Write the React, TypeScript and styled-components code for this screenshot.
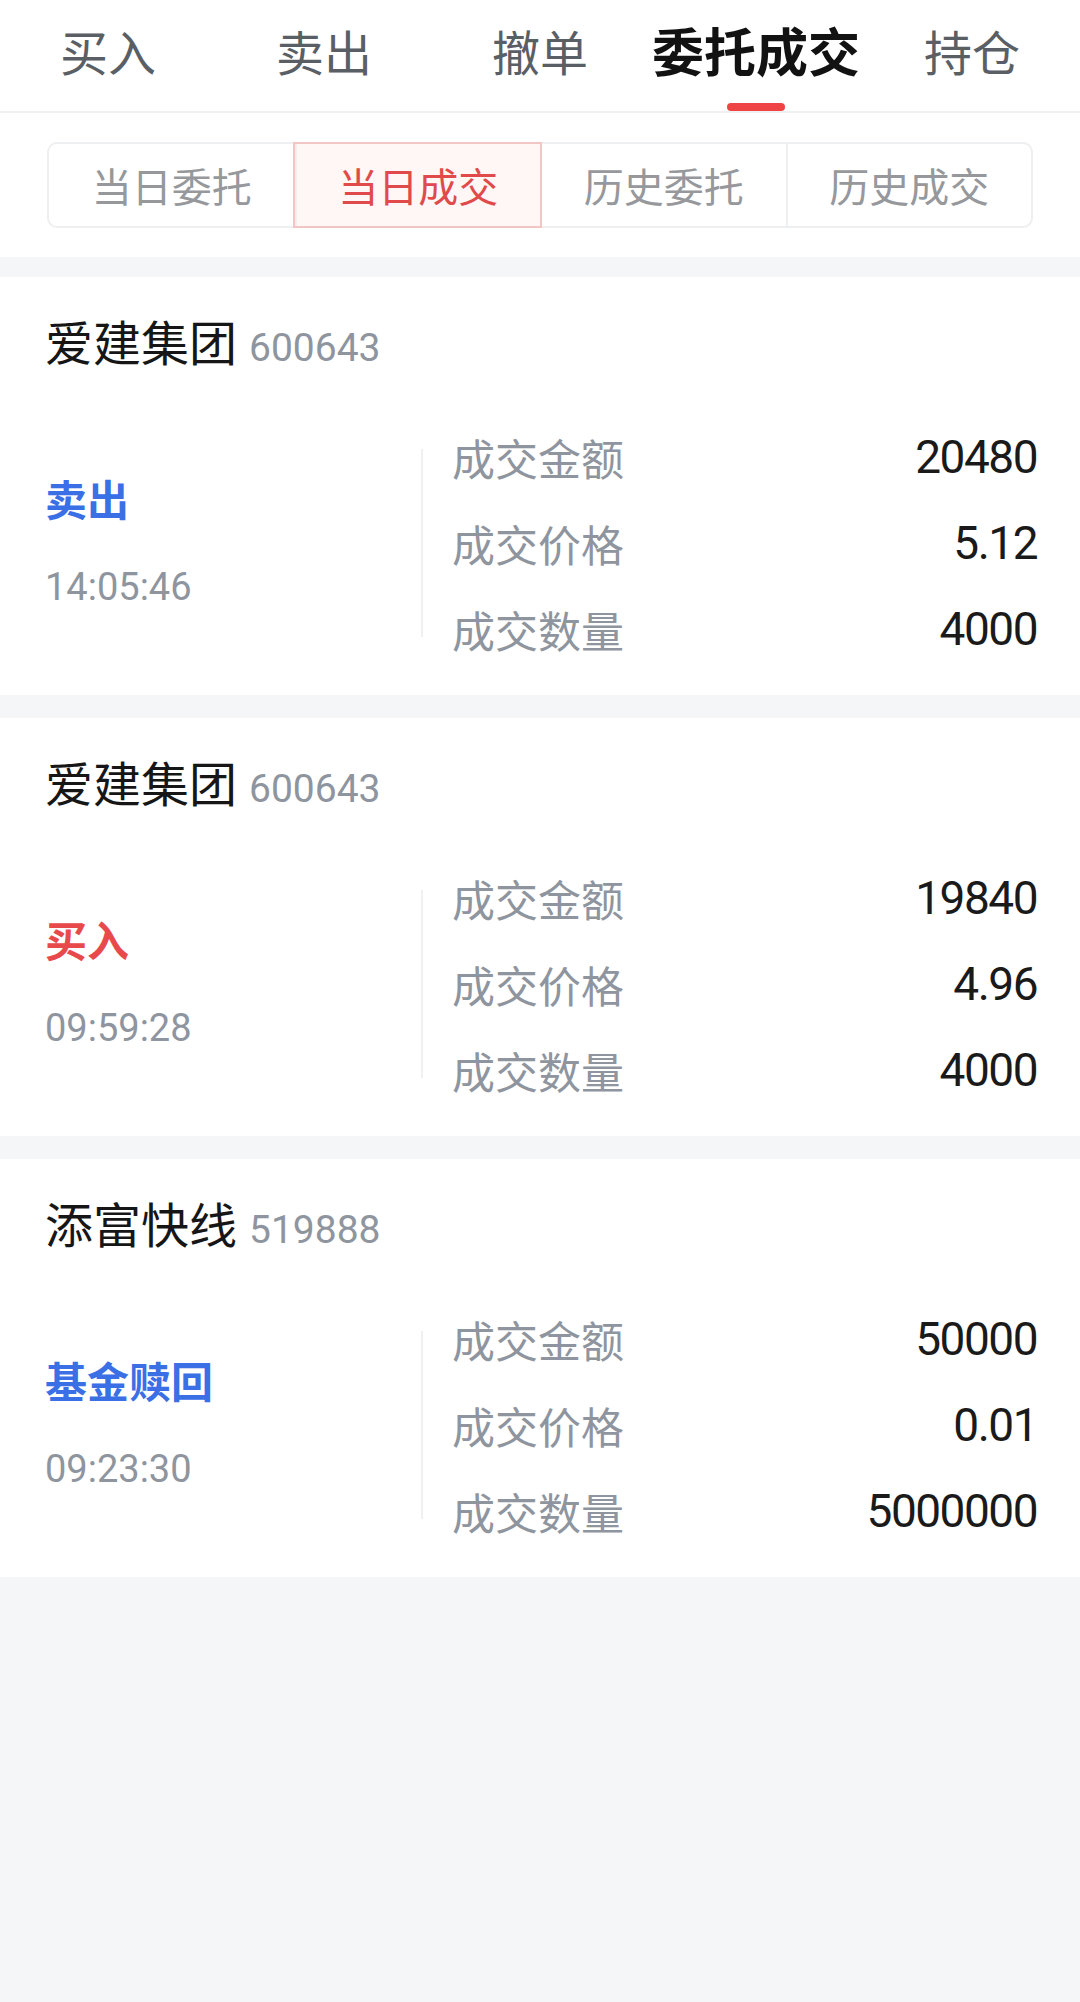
import React from "react";
import styled, { createGlobalStyle } from "styled-components";

const GlobalStyle = createGlobalStyle`
  html, body {
    margin: 0;
    padding: 0;
    background: #f5f6f8;
  }
  body {
    font-family: "Noto Sans CJK SC", "Noto Sans", sans-serif;
    -webkit-font-smoothing: antialiased;
  }
  * {
    box-sizing: border-box;
  }
`;

const Page = styled.div`
  width: 1080px;
  min-height: 2002px;
  background: #f5f6f8;
`;

const TabBar = styled.div`
  display: flex;
  height: 113px;
  background: #fff;
  border-bottom: 2px solid #f0f1f3;
`;

const Tab = styled.div<{ active?: boolean }>`
  position: relative;
  flex: 1;
  display: flex;
  align-items: center;
  justify-content: center;
  padding-bottom: 12px;
  font-size: ${(p) => (p.active ? "52px" : "48px")};
  font-weight: ${(p) => (p.active ? 700 : 400)};
  color: ${(p) => (p.active ? "#121212" : "#5a5e65")};
  line-height: 1;

  &::after {
    content: "";
    display: ${(p) => (p.active ? "block" : "none")};
    position: absolute;
    bottom: 0;
    left: 50%;
    width: 58px;
    height: 8px;
    margin-left: -29px;
    border-radius: 4px;
    background: #ee4444;
  }
`;

const FilterArea = styled.div`
  background: #fff;
  padding: 29px 47px 29px 47px;
`;

const Segments = styled.div`
  display: grid;
  grid-template-columns: repeat(4, 1fr);
  height: 86px;
  border: 2px solid #eeeff1;
  border-radius: 10px;
`;

const Segment = styled.div<{ active?: boolean }>`
  position: relative;
  display: flex;
  align-items: center;
  justify-content: center;
  font-size: 40px;
  color: ${(p) => (p.active ? "#e04a4a" : "#96989c")};
  background: ${(p) => (p.active ? "#fff6f6" : "transparent")};
  border-left: 2px solid #eeeff1;
  z-index: ${(p) => (p.active ? 1 : 0)};
  box-shadow: ${(p) => (p.active ? "0 0 0 2px #f3c6c6" : "none")};

  &:first-child {
    border-left: none;
  }
`;

const List = styled.div`
  display: flex;
  flex-direction: column;
  gap: 23px;
  padding-top: 20px;
`;

const Card = styled.div`
  background: #fff;
  height: 418px;
  padding: 33px 43px 0 45px;
`;

const NameRow = styled.div`
  display: flex;
  align-items: baseline;
  height: 60px;
  line-height: 60px;
`;

const StockName = styled.span`
  font-size: 48px;
  color: #161616;
`;

const StockCode = styled.span`
  margin-left: 12px;
  font-family: Roboto, "Noto Sans", sans-serif;
  font-size: 39px;
  color: #8f959e;
`;

const Body = styled.div`
  display: flex;
  align-items: center;
  margin-top: 44px;
`;

const Side = styled.div`
  width: 376px;
  display: flex;
  flex-direction: column;
  gap: 44px;
  padding-bottom: 6px;
`;

const Direction = styled.div<{ tone: "buy" | "sell" }>`
  font-size: 42px;
  font-weight: 700;
  line-height: 50px;
  color: ${(p) => (p.tone === "buy" ? "#e84a4b" : "#3a6fe6")};
`;

const Time = styled.div`
  font-family: Roboto, "Noto Sans", sans-serif;
  font-size: 38px;
  line-height: 40px;
  color: #8f959e;
`;

const Divider = styled.div`
  width: 2px;
  height: 188px;
  background: #eef0f2;
`;

const Details = styled.div`
  flex: 1;
  padding-left: 29px;
`;

const DetailRow = styled.div`
  display: flex;
  align-items: center;
  justify-content: space-between;
  height: 86px;
`;

const Label = styled.span`
  font-size: 43px;
  color: #8f959e;
`;

const Value = styled.span`
  font-family: Roboto, "Noto Sans", sans-serif;
  font-size: 46px;
  letter-spacing: -1.5px;
  color: #1a1a1a;
`;

type Trade = {
  name: string;
  code: string;
  side: string;
  tone: "buy" | "sell";
  time: string;
  amount: string;
  price: string;
  qty: string;
};

const trades: Trade[] = [
  {
    name: "爱建集团",
    code: "600643",
    side: "卖出",
    tone: "sell",
    time: "14:05:46",
    amount: "20480",
    price: "5.12",
    qty: "4000",
  },
  {
    name: "爱建集团",
    code: "600643",
    side: "买入",
    tone: "buy",
    time: "09:59:28",
    amount: "19840",
    price: "4.96",
    qty: "4000",
  },
  {
    name: "添富快线",
    code: "519888",
    side: "基金赎回",
    tone: "sell",
    time: "09:23:30",
    amount: "50000",
    price: "0.01",
    qty: "5000000",
  },
];

const tabs = ["买入", "卖出", "撤单", "委托成交", "持仓"];
const segments = ["当日委托", "当日成交", "历史委托", "历史成交"];

export default function App() {
  return (
    <Page>
      <GlobalStyle />
      <TabBar>
        {tabs.map((t) => (
          <Tab key={t} active={t === "委托成交"}>
            {t}
          </Tab>
        ))}
      </TabBar>

      <FilterArea>
        <Segments>
          {segments.map((s) => (
            <Segment key={s} active={s === "当日成交"}>
              {s}
            </Segment>
          ))}
        </Segments>
      </FilterArea>

      <List>
        {trades.map((tr, i) => (
          <Card key={i}>
            <NameRow>
              <StockName>{tr.name}</StockName>
              <StockCode>{tr.code}</StockCode>
            </NameRow>
            <Body>
              <Side>
                <Direction tone={tr.tone}>{tr.side}</Direction>
                <Time>{tr.time}</Time>
              </Side>
              <Divider />
              <Details>
                <DetailRow>
                  <Label>成交金额</Label>
                  <Value>{tr.amount}</Value>
                </DetailRow>
                <DetailRow>
                  <Label>成交价格</Label>
                  <Value>{tr.price}</Value>
                </DetailRow>
                <DetailRow>
                  <Label>成交数量</Label>
                  <Value>{tr.qty}</Value>
                </DetailRow>
              </Details>
            </Body>
          </Card>
        ))}
      </List>
    </Page>
  );
}
